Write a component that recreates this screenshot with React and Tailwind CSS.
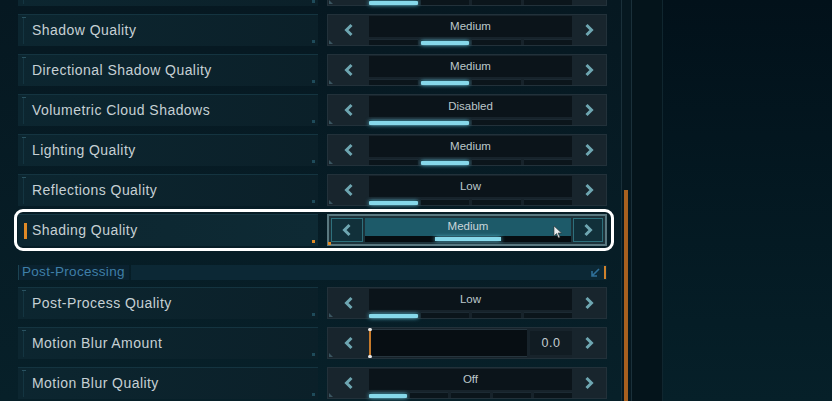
import React from 'react';

const Chevron = ({ dir = 'left' }) => (
    <svg width="10" height="14" viewBox="0 0 10 14" className="block">
        <polyline
            points={dir === 'left' ? '7.5,2 2.5,7 7.5,12' : '2.5,2 7.5,7 2.5,12'}
            fill="none"
            stroke="#6ea6b1"
            strokeWidth="3"
            strokeLinejoin="miter"
        />
    </svg>
);

// bottom segment bar under the value
const Segments = ({ count, lit }) => (
    <div className="flex gap-[3px] h-[6px] mt-[2px]">
        {Array.from({ length: count }).map((_, i) => (
            <div key={i} className="flex-1 flex items-center bg-[#0b151b] border-t border-[#1c2a33]">
                {lit.includes(i) && (
                    <div className="h-[4px] w-full bg-[#86d8ea] shadow-[0_0_4px_#5fc8e0] rounded-[1px]" />
                )}
            </div>
        ))}
    </div>
);

const Label = ({ text, selected }) => (
    <div
        className={`relative w-[300px] h-[32px] flex items-center pl-[14px] border-t ${
            selected
                ? 'bg-gradient-to-r from-[#0c2630] to-[#0e2a34] border-[#173844]'
                : 'bg-gradient-to-r from-[#0c2630] to-[#0b2029] border-[#143440]'
        }`}
    >
        {selected ? (
            <div className="absolute left-[6px] top-[8px] w-[3px] h-[16px] bg-[#e08a26]" />
        ) : (
            <>
                <div className="absolute left-[5px] top-[3px] w-px h-[26px] bg-[#143541]" />
                <div className="absolute left-[4px] top-[2px] w-[4px] h-px bg-[#2a5260]" />
            </>
        )}
        <span className="text-[14px] text-[#c6d0d4] tracking-[0.45px]">{text}</span>
        <div
            className={`absolute right-[3px] bottom-[3px] w-[3px] h-[3px] ${selected ? 'bg-[#e08a26]' : 'bg-[#1f4b5a]'}`}
        />
    </div>
);

const Control = ({ value, segs, lit, selected, slider }) => {
    if (selected) {
        return (
            <div className="relative w-[280px] h-[32px] flex items-stretch bg-[#1c3139] border-2 border-[#5a7880] p-[2px] gap-[2px]">
                <div className="w-[32px] flex items-center justify-center border border-[#2e707c] bg-[#11303a]">
                    <Chevron dir="left" />
                </div>
                <div className="flex-1 flex flex-col bg-[#1d5a69]">
                    <div className="h-[18px] flex items-center justify-center text-[11.5px] text-[#c9d6da]">
                        {value}
                    </div>
                    <div className="flex-1 flex gap-[3px] bg-[#060d11]">
                        {Array.from({ length: segs }).map((_, i) => (
                            <div key={i} className="flex-1 flex items-center">
                                {lit.includes(i) && <div className="h-[4px] w-full bg-[#86d8ea] shadow-[0_0_4px_#5fc8e0]" />}
                            </div>
                        ))}
                    </div>
                </div>
                <div className="w-[30px] flex items-center justify-center border border-[#2e707c] bg-[#11303a]">
                    <Chevron dir="right" />
                </div>
                <div className="absolute left-[-1px] bottom-[-1px] w-[3px] h-[3px] bg-[#e08a26]" />
            </div>
        );
    }
    return (
        <div className="relative w-[280px] h-[32px] flex items-stretch bg-[#17232b] border border-[#22313a]">
            <div className="w-[41px] flex items-center justify-center bg-[#18252d]">
                <Chevron dir="left" />
            </div>
            {slider ? (
                <div className="flex-1 flex items-center gap-[3px] py-[2px]">
                    <div className="relative flex-1 h-[28px] bg-[#070e13] border-y border-[#26353e]">
                        <div className="absolute left-0 top-[-1px] w-[2px] h-[28px] bg-[#c77a2a]" />
                        <div className="absolute left-[-1px] top-[-2px] w-[4px] h-[3px] bg-[#e6e6e6] rounded-full" />
                        <div className="absolute left-[-1px] bottom-[-2px] w-[4px] h-[3px] bg-[#e6e6e6] rounded-full" />
                    </div>
                    <div className="w-[42px] h-[24px] flex items-center justify-center bg-[#111c23] text-[12.5px] text-[#c2ccd0] tracking-[0.5px]">
                        {value}
                    </div>
                </div>
            ) : (
                <div className="flex-1 flex flex-col pt-[1px]">
                    <div className="h-[21px] flex items-center justify-center bg-[#0b141a] text-[11.5px] text-[#bcc7cb]">
                        {value}
                    </div>
                    <Segments count={segs} lit={lit} />
                </div>
            )}
            <div className="w-[34px] flex items-center justify-center bg-[#18252d]">
                <Chevron dir="right" />
            </div>
            <div className="absolute left-[1px] bottom-[1px] w-0 h-0 border-l-[4px] border-l-[#3a5560] border-t-[4px] border-t-transparent" />
        </div>
    );
};

const Row = ({ label, selected, ...rest }) => (
    <div className="relative w-[589px] flex items-center gap-[9px]">
        <Label text={label} selected={selected} />
        <Control selected={selected} {...rest} />
        {selected && (
            <div className="absolute left-[-4px] right-[-7px] top-[-5px] bottom-[-5px] border-[3px] border-white rounded-[9px] pointer-events-none" />
        )}
        {selected && (
            <svg className="absolute left-[535px] top-[11px]" width="10" height="14" viewBox="0 0 10 14">
                <path d="M1 1 L1 11 L3.5 8.5 L5.5 13 L7 12.3 L5 8 L8.5 8 Z" fill="#e8eef0" stroke="#333" strokeWidth="0.6" />
            </svg>
        )}
    </div>
);

const topRows = [
    { label: '', value: '', segs: 4, lit: [0] },
    { label: 'Shadow Quality', value: 'Medium', segs: 4, lit: [1] },
    { label: 'Directional Shadow Quality', value: 'Medium', segs: 4, lit: [1] },
    { label: 'Volumetric Cloud Shadows', value: 'Disabled', segs: 2, lit: [0] },
    { label: 'Lighting Quality', value: 'Medium', segs: 4, lit: [1] },
    { label: 'Reflections Quality', value: 'Low', segs: 4, lit: [0] },
    { label: 'Shading Quality', value: 'Medium', segs: 3, lit: [1], selected: true },
];

const postRows = [
    { label: 'Post-Process Quality', value: 'Low', segs: 4, lit: [0] },
    { label: 'Motion Blur Amount', value: '0.0', slider: true },
    { label: 'Motion Blur Quality', value: 'Off', segs: 5, lit: [0] },
];

const App = () => {
    return (
        <div className="w-[832px] h-[401px] overflow-hidden flex bg-[#061a22] font-['Liberation_Sans',sans-serif]">
            {/* settings list */}
            <div className="w-[621px] shrink-0 pl-[18px] bg-gradient-to-b from-[#061821] to-[#072029]">
                <div className="flex flex-col gap-[8px] mt-[-26px]">
                    {topRows.map((r, i) => (
                        <Row key={i} {...r} />
                    ))}
                </div>

                {/* section header */}
                <div className="mt-[19px] w-[589px] h-[15px] flex items-stretch">
                    <div className="w-px bg-[#1b4353]" />
                    <div className="w-[110px] bg-[#0a2230] flex items-center pl-[3px] text-[13.5px] text-[#3f7fa8] tracking-[0.3px]">
                        Post-Processing
                    </div>
                    <div className="flex-1 ml-[2px] bg-[#0c2835] flex items-center justify-end pr-[1px] gap-[4px]">
                        <svg width="9" height="9" viewBox="0 0 9 9">
                            <path d="M8 1 L1.5 7.5 M1 3 L1 8 L6 8" fill="none" stroke="#2f6f98" strokeWidth="1.6" />
                        </svg>
                        <div className="w-[2px] h-[13px] bg-[#d0822c]" />
                    </div>
                </div>

                <div className="flex flex-col gap-[8px] mt-[7px]">
                    {postRows.map((r, i) => (
                        <Row key={i} {...r} />
                    ))}
                </div>
            </div>

            {/* scrollbar track */}
            <div className="w-[11px] shrink-0 flex flex-col border-x border-[#1a303a] bg-[#061820]">
                <div className="h-[190px]" />
                <div className="flex-1 mx-[2px] w-[4px] bg-[#a9601f]" />
            </div>
            <div className="w-[31px] shrink-0 bg-[#04141b] border-r border-[#10262f]" />

            {/* empty right side */}
            <div className="flex-1 bg-gradient-to-b from-[#02111a] to-[#062029]" />
        </div>
    );
};

export default App;
